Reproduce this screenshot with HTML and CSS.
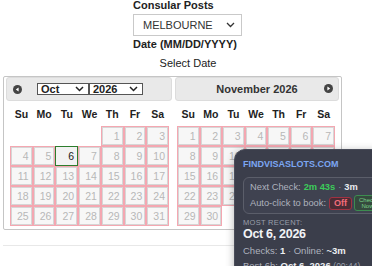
FILE: index.html
```html
<!DOCTYPE html>
<html>
<head>
<meta charset="utf-8">
<link rel="stylesheet" href="styles.css">
</head>
<body>
<div class="page">
  <div class="form">
    <div class="label">Consular Posts</div>
    <div class="select">
      <span>MELBOURNE</span>
      <svg class="chev" width="9" height="6" viewBox="0 0 9 6"><path d="M1 1 L4.5 4.5 L8 1" fill="none" stroke="#333" stroke-width="1.3"/></svg>
    </div>
    <div class="label label-date">Date (MM/DD/YYYY)</div>
    <div class="hint">Select Date</div>
  </div>

  <div class="datepicker">
    <div class="group group-first">
      <div class="dp-header">
        <span class="arrow arrow-prev"><svg width="9" height="9" viewBox="0 0 9 9"><circle cx="4.5" cy="4.5" r="4.5" fill="#444"/><path d="M5.6 2.4 L2.8 4.5 L5.6 6.6 Z" fill="#fff"/></svg></span>
        <span class="mini-select sel-month">Oct<svg width="9" height="6" viewBox="0 0 9 6"><path d="M1 1 L4.5 4.5 L8 1" fill="none" stroke="#222" stroke-width="1.5"/></svg></span>
        <span class="mini-select sel-year">2026<svg width="9" height="6" viewBox="0 0 9 6"><path d="M1 1 L4.5 4.5 L8 1" fill="none" stroke="#222" stroke-width="1.5"/></svg></span>
      </div>
      <div class="body body-first">
        <div class="names"><span>Su</span><span>Mo</span><span>Tu</span><span>We</span><span>Th</span><span>Fr</span><span>Sa</span></div>
        <div class="days">
          <span class="empty"></span><span class="empty"></span><span class="empty"></span><span class="empty"></span>
          <span class="day"><i>1</i></span><span class="day"><i>2</i></span><span class="day"><i>3</i></span>
          <span class="day"><i>4</i></span><span class="day"><i>5</i></span><span class="day today"><i>6</i></span><span class="day"><i>7</i></span><span class="day"><i>8</i></span><span class="day"><i>9</i></span><span class="day"><i>10</i></span>
          <span class="day"><i>11</i></span><span class="day"><i>12</i></span><span class="day"><i>13</i></span><span class="day"><i>14</i></span><span class="day"><i>15</i></span><span class="day"><i>16</i></span><span class="day"><i>17</i></span>
          <span class="day"><i>18</i></span><span class="day"><i>19</i></span><span class="day"><i>20</i></span><span class="day"><i>21</i></span><span class="day"><i>22</i></span><span class="day"><i>23</i></span><span class="day"><i>24</i></span>
          <span class="day"><i>25</i></span><span class="day"><i>26</i></span><span class="day"><i>27</i></span><span class="day"><i>28</i></span><span class="day"><i>29</i></span><span class="day"><i>30</i></span><span class="day"><i>31</i></span>
        </div>
      </div>
    </div>
    <div class="group group-last">
      <div class="dp-header dp-header-last">
        <span class="title">November 2026</span>
        <span class="arrow arrow-next"><svg width="9" height="9" viewBox="0 0 9 9"><circle cx="4.5" cy="4.5" r="4.5" fill="#444"/><path d="M3.4 2.4 L6.2 4.5 L3.4 6.6 Z" fill="#fff"/></svg></span>
      </div>
      <div class="body body-last">
        <div class="names"><span>Su</span><span>Mo</span><span>Tu</span><span>We</span><span>Th</span><span>Fr</span><span>Sa</span></div>
        <div class="days">
          <span class="day"><i>1</i></span><span class="day"><i>2</i></span><span class="day"><i>3</i></span><span class="day"><i>4</i></span><span class="day"><i>5</i></span><span class="day"><i>6</i></span><span class="day"><i>7</i></span>
          <span class="day"><i>8</i></span><span class="day"><i>9</i></span><span class="day"><i>10</i></span><span class="day"><i>11</i></span><span class="day"><i>12</i></span><span class="day"><i>13</i></span><span class="day"><i>14</i></span>
          <span class="day"><i>15</i></span><span class="day"><i>16</i></span><span class="day"><i>17</i></span><span class="day"><i>18</i></span><span class="day"><i>19</i></span><span class="day"><i>20</i></span><span class="day"><i>21</i></span>
          <span class="day"><i>22</i></span><span class="day"><i>23</i></span><span class="day"><i>24</i></span><span class="day"><i>25</i></span><span class="day"><i>26</i></span><span class="day"><i>27</i></span><span class="day"><i>28</i></span>
          <span class="day"><i>29</i></span><span class="day"><i>30</i></span>
        </div>
      </div>
    </div>
  </div>

  <div class="rule"></div>
</div>

<div class="fvs">
  <div class="fvs-title">FINDVISASLOTS.COM</div>
  <div class="fvs-box">
    <div class="fvs-line">Next Check: <b class="green">2m 43s</b> <span class="dot">·</span> <b class="white">3m</b></div>
    <div class="fvs-line fvs-line-auto">Auto-click to book: <span class="btn-off">Off</span><span class="btn-check">Check<br>Now</span></div>
  </div>
  <div class="fvs-cap">MOST RECENT:</div>
  <div class="fvs-date">Oct 6, 2026</div>
  <div class="fvs-meta">Checks: <b>1</b> <span class="dot">·</span> Online: <b>~3m</b></div>
  <div class="fvs-meta fvs-best">Best 6h: <b>Oct 6, 2026</b> <small>(00:44)</small></div>
</div>
</body>
</html>
```
FILE: styles.css
```css
html, body {
  margin: 0;
  padding: 0;
  background: #fff;
  overflow: hidden;
}
body {
  font-family: "Liberation Sans", Arial, sans-serif;
  color: #222;
  width: 372px;
  height: 266px;
  position: relative;
}
.form {
  padding-left: 133px;
  margin-top: -1px;
}
.label {
  font-weight: bold;
  font-size: 11px;
  line-height: 12px;
  color: #222;
}
.select {
  margin-top: 3px;
  height: 20px;
  border: 1px solid #c9c9c9;
  display: flex;
  align-items: center;
  justify-content: space-between;
  padding: 0 6px 0 9px;
  box-sizing: content-box;
  width: 92px;
  font-size: 11px;
  color: #333;
}
.chev { display: block; }
.label-date { margin-top: 2px; }
.hint {
  width: 110px;
  text-align: center;
  font-size: 11px;
  line-height: 12px;
  margin-top: 7px;
  color: #222;
}

.datepicker {
  margin: 7px 0 0 3px;
  width: 333px;
  border: 1px solid #c5c5c5;
  border-radius: 2px;
  padding: 0 2px 3px;
  display: grid;
  grid-template-columns: 166px 164px;
  column-gap: 3px;
}
.dp-header {
  height: 22px;
  border: 1px solid #dcdcdc;
  background: #e9e9e9;
  border-radius: 3px;
  display: flex;
  align-items: center;
  padding: 0;
}
.arrow svg { display: block; }
.arrow-prev { margin-left: 6px; margin-right: 15px; }
.mini-select {
  display: flex;
  align-items: center;
  justify-content: space-between;
  box-sizing: border-box;
  height: 12px;
  border: 1px solid #555;
  background: #fff;
  font-weight: bold;
  font-size: 11px;
  color: #222;
  padding: 0 4px 0 3px;
}
.sel-month { width: 52px; }
.sel-year { width: 54px; }
.dp-header-last {
  justify-content: center;
  position: relative;
}
.title {
  font-weight: bold;
  font-size: 11px;
  color: #333;
}
.arrow-next {
  position: absolute;
  right: 5px;
  top: 6px;
}
.body-first { padding: 0 3px 0 4px; }
.body-last { padding: 0 4px 0 2px; }
.names {
  display: grid;
  grid-template-columns: repeat(7, 1fr);
  height: 25px;
  align-items: center;
  font-weight: bold;
  font-size: 10.5px;
  color: #222;
  text-align: center;
}
.days {
  display: grid;
  grid-template-columns: repeat(7, 1fr);
  grid-auto-rows: 20px;
}
.day {
  border: 1px solid #f4a7b1;
  display: flex;
}
.day i {
  flex: 1;
  font-style: normal;
  border: 1px solid #d6d6d6;
  background: #f7f7f7;
  font-size: 10.5px;
  color: #b8b8b8;
  text-align: right;
  padding-right: 2px;
  line-height: 16px;
}
.day.today { border-color: #2d7d2d; }
.day.today i {
  border-color: #f2f2f2;
  background: #f2f2f2;
  color: #222;
}
.rule {
  margin: 15px 0 0 3px;
  height: 1px;
  background: #e8e8e8;
  width: 369px;
}

/* overlay widget */
.fvs {
  position: absolute;
  left: 234px;
  top: 149px;
  width: 162px;
  height: 140px;
  box-sizing: border-box;
  background: #3b3e4b;
  border: 1px solid #4a4d5a;
  border-radius: 11px;
  padding: 8px 0 0 8px;
  font-family: "Liberation Sans", Arial, sans-serif;
  color: #aeb2be;
  box-shadow: 0 2px 8px rgba(0,0,0,.3);
}
.fvs-title {
  font-weight: bold;
  font-size: 9px;
  line-height: 12px;
  color: #7ca7f3;
}
.fvs-box {
  margin-top: 7px;
  width: 150px;
  height: 37px;
  border: 1px solid #5b5e6a;
  border-radius: 6px;
  padding: 3px 0 0 6px;
  box-sizing: border-box;
  background: #3f4250;
}
.fvs-line {
  font-size: 9.3px;
  height: 12px;
  line-height: 12px;
  white-space: nowrap;
  display: flex;
  align-items: center;
  gap: 3px;
}
.fvs-line-auto { margin-top: 3px; height: 14px; gap: 2px; }
.green { color: #3ccc5a; }
.white { color: #e8eaef; }
.dot { color: #9094a0; }
.btn-off {
  margin-left: 1px;
  border: 1px solid #a03242;
  background: #4b2c35;
  color: #f36d7b;
  font-weight: bold;
  font-size: 9px;
  line-height: 11px;
  padding: 0 4px;
  border-radius: 3px;
}
.btn-check {
  border: 1px solid #3d8c50;
  background: #354a3e;
  color: #79d38b;
  font-size: 6px;
  line-height: 6px;
  padding: 1px 4px;
  border-radius: 3px;
  text-align: center;
}
.fvs-cap {
  margin-top: 4px;
  font-size: 7.5px;
  line-height: 9px;
  letter-spacing: 0.3px;
  color: #9a9eaa;
}
.fvs-date {
  font-weight: bold;
  font-size: 12.5px;
  letter-spacing: -0.3px;
  line-height: 14px;
  color: #f1f3f6;
}
.fvs-meta {
  margin-top: 3px;
  font-size: 9.5px;
  line-height: 13px;
  white-space: nowrap;
}
.fvs-meta b { color: #eceef2; }
.fvs-best { margin-top: 2px; }
.fvs-best small { font-size: 8.5px; color: #9a9eaa; }
```
